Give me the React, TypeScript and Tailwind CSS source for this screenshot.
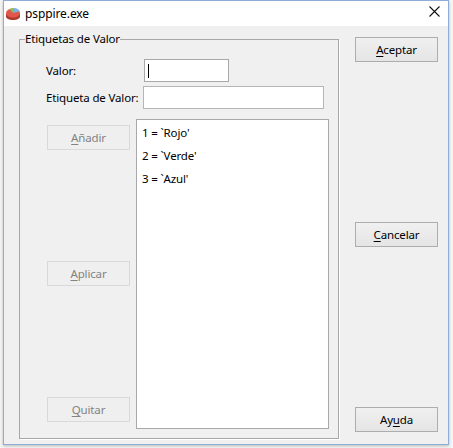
import React from "react";

const FONT = "font-['Noto_Sans','DejaVu_Sans',sans-serif]";

// pie chart logo from the title bar
function PieIcon() {
  return (
    <svg width="16" height="14" viewBox="0 0 16 14" className="shrink-0">
      <path d="M1 6.500v3C1 11.500 4 13 8 13s7-1.500 7-3.500v-3z" fill="#b03a2e" />
      <ellipse cx="8" cy="6" rx="7" ry="4.600" fill="#e2574c" />
      <path d="M8 6L4.500 2C6 1.300 7.500 1 9 1z" fill="#8cc152" />
      <path d="M8 6l1-5c2.800.2 5 1.400 5.800 3.200z" fill="#7fb2e5" />
    </svg>
  );
}

function CloseIcon() {
  return (
    <svg width="11" height="11" viewBox="0 0 11 11" className="shrink-0 mb-[4px]">
      <path d="M.5.500l10 10M10.500.500l-10 10" stroke="#111" strokeWidth="1.100" fill="none" />
    </svg>
  );
}

function Btn({ before, u, after, off }: { before?: string; u: string; after: string; off?: boolean }) {
  return (
    <button
      className={`w-[83px] h-[25px] shrink-0 flex items-center justify-center border text-[11.5px] leading-none ${
        off ? "border-[#d9d9d9] bg-[#efefef] text-[#838383]" : "border-[#adadad] bg-gradient-to-b from-[#f0f0f0] to-[#e5e5e5] text-black"
      }`}
    >
      <span>
        {before}
        <span className="underline underline-offset-2">{u}</span>
        {after}
      </span>
    </button>
  );
}

const items = ["1 = `Rojo'", "2 = `Verde'", "3 = `Azul'"];

export default function App() {
  return (
    <div className={`w-[453px] h-[448px] overflow-hidden bg-[#f6f6f6] pl-[3px] text-[11.5px] tracking-[-0.15px] text-black ${FONT}`}>
      <div className="w-[446px] h-[445px] flex flex-col border border-t-0 border-[#8fadd4] shadow-[0_1px_3px_rgba(0,0,0,0.25)]">
        {/* title bar */}
        <div className="h-[26px] shrink-0 bg-white flex items-center justify-between pl-[1px] pr-[8px] border-t border-[#8fadd4]">
          <div className="flex items-center gap-[4px]">
            <PieIcon />
            <span className="text-[12px] tracking-[-0.1px]">psppire.exe</span>
          </div>
          <CloseIcon />
        </div>

        <div className="flex-1 min-h-0 bg-[#f0f0f0] flex pl-[15px] pr-[8px] gap-[16px]">
          {/* group */}
          <fieldset className="w-[320px] h-[408px] mt-[5px] border border-[#a8a8a8] shadow-[1px_1px_0_#ffffff] pl-[26px] pr-[8px] pb-[8px]">
            <legend className="-ml-[21px] h-[16px] leading-[16px] px-0">Etiquetas de Valor</legend>
            <div className="flex items-center mt-[12px] h-[23px]">
              <span className="w-[98px]">Valor:</span>
              <div className="w-[85px] h-[23px] bg-white border border-[#a9a9a9] flex items-center pl-[3px]">
                <div className="w-px h-[14px] bg-black" />
              </div>
            </div>
            <div className="flex items-center mt-[4px] h-[23px]">
              <span className="w-[97px] whitespace-nowrap">Etiqueta de Valor:</span>
              <div className="w-[181px] h-[23px] bg-white border border-[#b5b5b5]" />
            </div>
            <div className="flex mt-[10px] gap-[6px] h-[310px]">
              <div className="flex flex-col justify-between ml-[1px] pt-[6px] pb-[7px]">
                <Btn u="A" after="ñadir" off />
                <Btn u="A" after="plicar" off />
                <Btn u="Q" after="uitar" off />
              </div>
              <div className="w-[193px] bg-white border border-[#a9a9a9] pl-[5px] pt-[1px]">
                {items.map((it) => (
                  <div key={it} className="h-[23px] leading-[23px] whitespace-nowrap">{it}</div>
                ))}
              </div>
            </div>
          </fieldset>

          {/* right buttons */}
          <div className="flex flex-col justify-between pt-[11px] pb-[12px]">
            <Btn u="A" after="ceptar" />
            <Btn u="C" after="ancelar" />
            <Btn before="Ay" u="u" after="da" />
          </div>
        </div>
      </div>
    </div>
  );
}
